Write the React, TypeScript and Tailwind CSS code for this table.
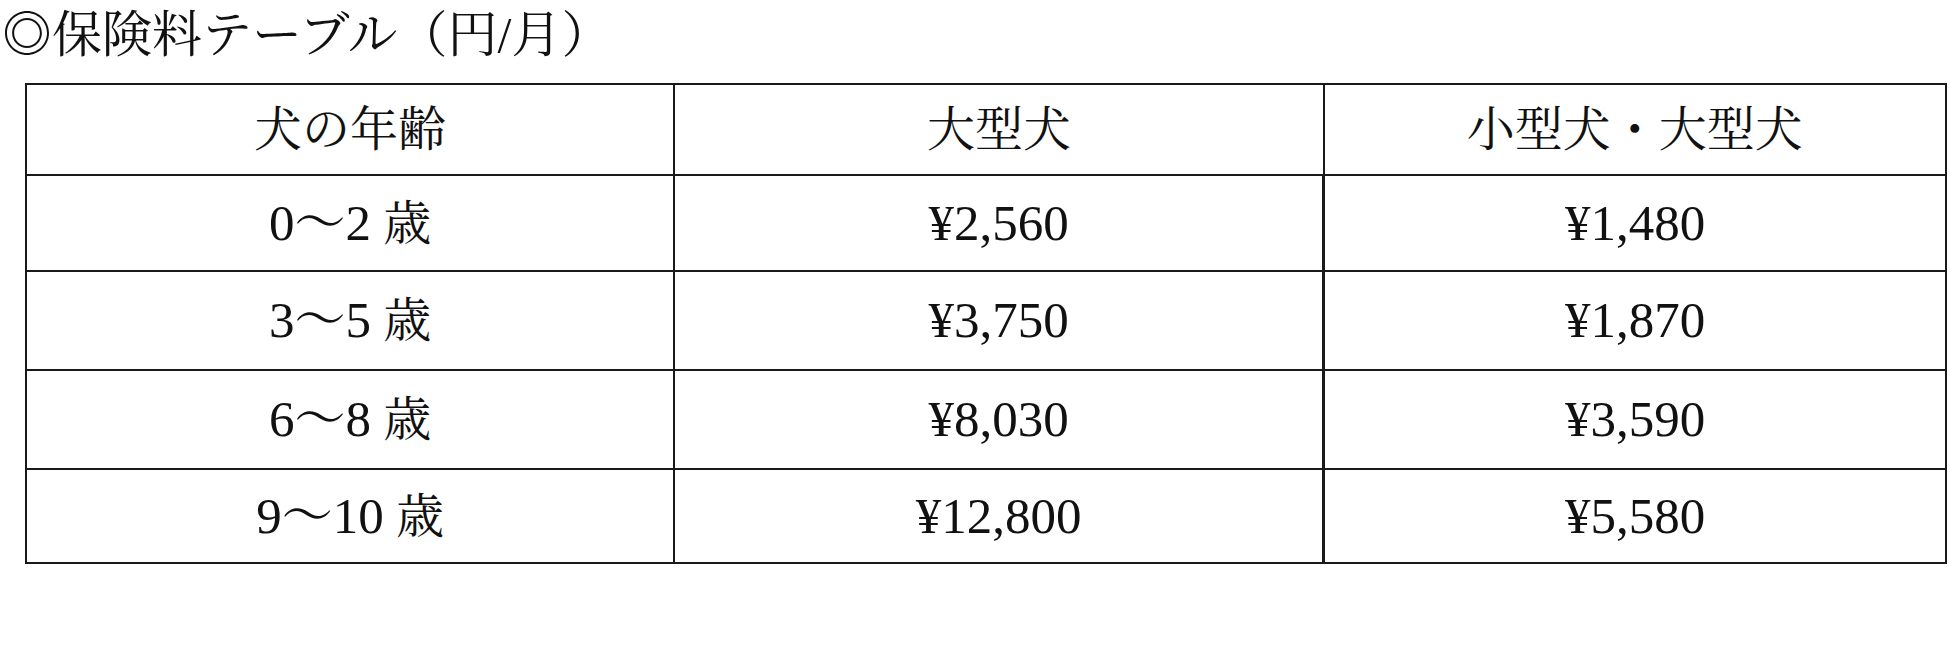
const FONT = '"Liberation Serif", "Noto Serif CJK JP", "Noto Sans CJK JP", serif'

const rows = [
  { age: '0〜2', large: '¥2,560', both: '¥1,480', h: 'h-[96px]' },
  { age: '3〜5', large: '¥3,750', both: '¥1,870', h: 'h-[99px]' },
  { age: '6〜8', large: '¥8,030', both: '¥3,590', h: 'h-[99px]' },
  { age: '9〜10', large: '¥12,800', both: '¥5,580', h: 'h-[94px]' },
]

export default function App() {
  return (
    <div className="w-[1950px] h-[647px] bg-white text-[#111]" style={{ fontFamily: FONT }}>
      <h1 className="pl-[2px] h-[83px] pt-[4px] text-[50px] leading-[62px] font-normal">◎保険料テーブル（円/月）</h1>
      <table className="ml-[25px] w-[1922px] border-collapse text-[48px]">
        <colgroup>
          <col className="w-[649px]" />
          <col className="w-[650px]" />
          <col className="w-[623px]" />
        </colgroup>
        <thead>
          <tr className="h-[91px]">
            <th className="border-2 border-[#1a1a1a] font-normal text-center align-middle">犬の年齢</th>
            <th className="border-2 border-[#1a1a1a] font-normal text-center align-middle">大型犬</th>
            <th className="border-2 border-[#1a1a1a] font-normal text-center align-middle">小型犬・大型犬</th>
          </tr>
        </thead>
        <tbody>
          {rows.map((r) => (
            <tr key={r.age} className={r.h}>
              <td className="border-2 border-[#1a1a1a] text-center align-middle">
                <span className="text-[51px]">{r.age}</span> 歳
              </td>
              <td className="border-2 border-[#1a1a1a] text-center align-middle text-[51px]">{r.large}</td>
              <td className="border-2 border-l-[3px] border-[#1a1a1a] text-center align-middle text-[51px]">{r.both}</td>
            </tr>
          ))}
        </tbody>
      </table>
    </div>
  )
}
